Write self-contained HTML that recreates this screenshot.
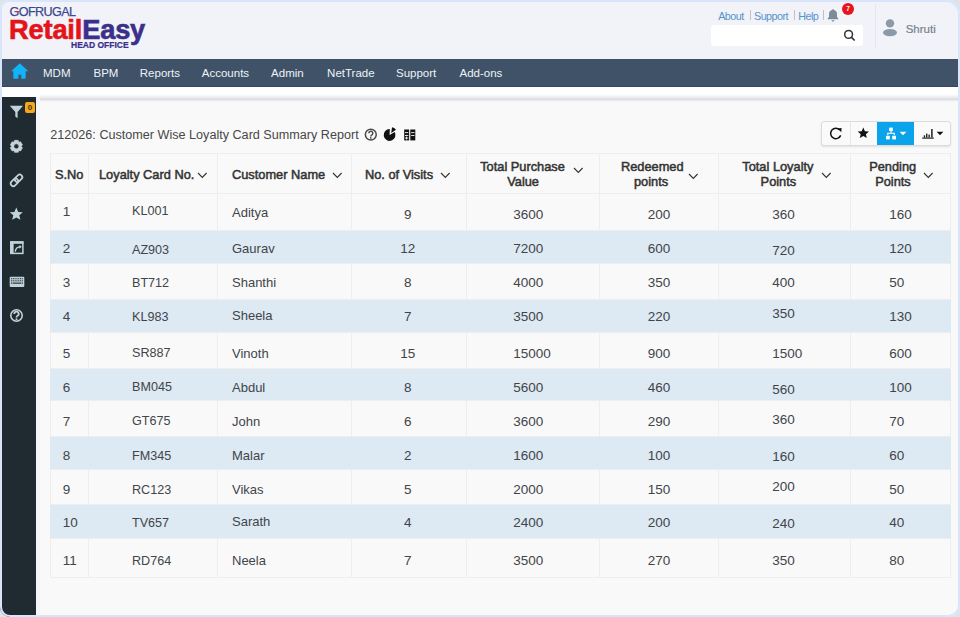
<!DOCTYPE html><html><head><meta charset="utf-8"><style>

*{margin:0;padding:0;box-sizing:border-box}
html,body{width:960px;height:617px;overflow:hidden;background:#d9e5f8;font-family:"Liberation Sans", sans-serif}
.a{position:absolute;white-space:nowrap}
#frame{position:absolute;left:0;top:0;width:960px;height:617px;border:2px solid #d8e5fa;border-radius:9px 14px 12px 10px;box-shadow:0 0 0 40px #dfe3e9;z-index:50}
body{background:#f1f3f8}
.nav{color:#eef2f6;font-size:11.5px;line-height:16px}
.td{font-size:13px;line-height:16px;color:#414549}
.th{font-size:12.8px;line-height:15px;color:#333;-webkit-text-stroke:0.5px #333}

</style></head><body>
<div class="a" style="left:9.6px;top:4.6px;font-size:12.6px;line-height:14px;color:#3d4790;letter-spacing:-0.6px;-webkit-text-stroke:0.25px #3d4790">GOFRUGAL</div>
<div class="a" style="left:14.5px;top:10.8px;width:4.6px;height:1.6px;background:#e8232b"></div>
<div class="a" style="left:9px;top:15px;font-weight:bold;font-size:27.3px;line-height:30px;letter-spacing:-0.2px"><span style="color:#e5141b;-webkit-text-stroke:0.6px #e5141b">Retail</span><span style="color:#3a2f8b;-webkit-text-stroke:0.6px #3a2f8b">Easy</span></div>
<div class="a" style="left:71px;top:39.5px;font-weight:bold;font-size:8.5px;line-height:10px;color:#3a2f8b;-webkit-text-stroke:0.2px #3a2f8b">HEAD OFFICE</div>
<div class="a" style="left:718.2px;top:9px;font-size:10.8px;line-height:14px;color:#5592cc;letter-spacing:-0.55px">About</div>
<div class="a" style="left:749.5px;top:10px;width:1px;height:9.5px;background:#bcc2c9"></div>
<div class="a" style="left:754px;top:9px;font-size:10.8px;line-height:14px;color:#5592cc;letter-spacing:-0.55px">Support</div>
<div class="a" style="left:794px;top:10px;width:1px;height:9.5px;background:#bcc2c9"></div>
<div class="a" style="left:798.3px;top:9px;font-size:10.8px;line-height:14px;color:#5592cc;letter-spacing:-0.55px">Help</div>
<div class="a" style="left:823px;top:10px;width:1px;height:9.5px;background:#bcc2c9"></div>
<svg class="a" style="left:826px;top:8px" width="14" height="14" viewBox="0 0 14 14"><path d="M7 1.2c.6 0 1 .4 1 .9 1.9.4 3 2 3 4v3l1.3 1.5v.6H1.7v-.6L3 9.1v-3c0-2 1.1-3.6 3-4 0-.5.4-.9 1-.9zM5.6 12.2h2.8c0 .8-.6 1.4-1.4 1.4s-1.4-.6-1.4-1.4z" fill="#7d8a97"/></svg>
<div class="a" style="left:842px;top:3px;width:12px;height:12px;border-radius:50%;background:#e8141c;color:#fff;font-size:6.5px;line-height:12px;text-align:center;font-weight:bold">7</div>
<div class="a" style="left:711px;top:25px;width:152px;height:21px;background:#fff;border-radius:3px"></div>
<svg class="a" style="left:840px;top:27px" width="18" height="16" viewBox="840 27 18 16"><circle cx="848.6" cy="34.4" r="3.9" fill="none" stroke="#333" stroke-width="1.5"/><path d="M851.5,37.3 L854.2,40" stroke="#333" stroke-width="1.7" stroke-linecap="round"/></svg>
<div class="a" style="left:874.5px;top:4px;width:1px;height:44px;background:#e3e6ec"></div>
<svg class="a" style="left:882px;top:18px" width="16" height="19" viewBox="0 0 16 19"><circle cx="8" cy="5.4" r="4.2" fill="#8b9aa8"/><ellipse cx="8" cy="14.6" rx="7" ry="3.6" fill="#8b9aa8"/></svg>
<div class="a" style="left:905.7px;top:21.5px;font-size:11.5px;line-height:14px;color:#78828d;-webkit-text-stroke:0.2px #78828d">Shruti</div>
<div class="a" style="left:0;top:59px;width:960px;height:28px;background:#3f5268;border-bottom:1px solid #34475c"></div>
<svg class="a" style="left:0;top:59px" width="40" height="28" viewBox="0 59 40 28"><path d="M19.8,63.6 L27.8,71 L25.4,71 L25.4,78.4 L21.4,78.4 L21.4,74.4 L18.2,74.4 L18.2,78.4 L13.6,78.4 L13.6,71 L11.6,71Z" fill="#13b3f7" stroke="#13b3f7" stroke-width="0.5" stroke-linejoin="round"/></svg>
<div class="a nav" style="left:43.0px;top:64.7px">MDM</div>
<div class="a nav" style="left:93.5px;top:64.7px">BPM</div>
<div class="a nav" style="left:139.8px;top:64.7px">Reports</div>
<div class="a nav" style="left:201.8px;top:64.7px">Accounts</div>
<div class="a nav" style="left:271.1px;top:64.7px">Admin</div>
<div class="a nav" style="left:327.1px;top:64.7px">NetTrade</div>
<div class="a nav" style="left:396.0px;top:64.7px">Support</div>
<div class="a nav" style="left:459.5px;top:64.7px">Add-ons</div>
<div class="a" style="left:0;top:87px;width:960px;height:10px;background:#fff"></div>
<div class="a" style="left:0;top:97px;width:36px;height:530px;background:#1f2b31"></div>
<div class="a" style="left:36px;top:97px;width:4px;height:530px;background:#f4f6fa"></div>
<div class="a" style="left:40px;top:94px;width:930px;height:6px;background:linear-gradient(to bottom, rgba(255,255,255,0), #e9ebee 60%, #d8dadd)"></div>
<div class="a" style="left:40px;top:100px;width:930px;height:530px;background:linear-gradient(to bottom, #e6e7ea, #f9f9f9 2px)"></div>
<svg class="a" style="left:9px;top:105px" width="15" height="14" viewBox="0 0 15 14"><path d="M0.8 0.8h13.2L8.6 7v6.3L6.3 11.6V7z" fill="#c3d3db"/></svg>
<div class="a" style="left:25px;top:102px;width:10px;height:11px;border-radius:2px;background:#f3a81d;color:#4a3000;font-size:8px;line-height:11px;text-align:center;font-weight:bold">0</div>
<svg class="a" style="left:0;top:0;z-index:5" width="40" height="340" viewBox="0 0 40 340"><path d="M14.49,140.33 L18.21,140.33 L18.75,142.43 L18.54,142.31 L20.63,141.73 L22.49,144.95 L20.95,146.47 L20.95,146.23 L22.49,147.75 L20.63,150.97 L18.54,150.39 L18.75,150.27 L18.21,152.37 L14.49,152.37 L13.95,150.27 L14.16,150.39 L12.07,150.97 L10.21,147.75 L11.75,146.23 L11.75,146.47 L10.21,144.95 L12.07,141.73 L14.16,142.31 L13.95,142.43Z M16.35,143.85 a2.5,2.5 0 1,0 0.01,0Z" fill="#c3d3db" fill-rule="evenodd" stroke="#c3d3db" stroke-width="0.6" stroke-linejoin="round"/><g transform="translate(16.5,180.3) rotate(-45)" fill="none" stroke="#c3d3db" stroke-width="1.7"><rect x="-7.1" y="-2.6" width="8.4" height="5.2" rx="2.6"/><rect x="-1.3" y="-2.6" width="8.4" height="5.2" rx="2.6"/></g><path d="M16.3,207.6 L18.2,211.9 L22.8,212.3 L19.3,215.3 L20.4,219.8 L16.3,217.4 L12.2,219.8 L13.3,215.3 L9.8,212.3 L14.4,211.9Z" fill="#c3d3db"/><rect x="10.9" y="242" width="12" height="11.4" fill="none" stroke="#c3d3db" stroke-width="1.5"/><rect x="10.2" y="241.4" width="13.2" height="2.4" fill="#c3d3db"/><rect x="10.2" y="241.4" width="3.4" height="12.6" fill="#c3d3db"/><path d="M15.2,251.6 C15.6,248.4 17.4,246.8 20.4,246.8" fill="none" stroke="#c3d3db" stroke-width="1.3"/><path d="M19.4,244.9 L21.9,246.8 L19.4,248.8Z" fill="#c3d3db"/><rect x="9.7" y="276.8" width="14.6" height="10.2" rx="1" fill="#c3d3db"/><rect x="11.0" y="278.1" width="1.1" height="1.2" fill="#33444c"/><rect x="11.0" y="280.2" width="1.1" height="1.2" fill="#33444c"/><rect x="12.8" y="278.1" width="1.1" height="1.2" fill="#33444c"/><rect x="12.8" y="280.2" width="1.1" height="1.2" fill="#33444c"/><rect x="14.6" y="278.1" width="1.1" height="1.2" fill="#33444c"/><rect x="14.6" y="280.2" width="1.1" height="1.2" fill="#33444c"/><rect x="16.4" y="278.1" width="1.1" height="1.2" fill="#33444c"/><rect x="16.4" y="280.2" width="1.1" height="1.2" fill="#33444c"/><rect x="18.2" y="278.1" width="1.1" height="1.2" fill="#33444c"/><rect x="18.2" y="280.2" width="1.1" height="1.2" fill="#33444c"/><rect x="20.0" y="278.1" width="1.1" height="1.2" fill="#33444c"/><rect x="20.0" y="280.2" width="1.1" height="1.2" fill="#33444c"/><rect x="21.8" y="278.1" width="1.1" height="1.2" fill="#33444c"/><rect x="21.8" y="280.2" width="1.1" height="1.2" fill="#33444c"/><rect x="12.6" y="282.5" width="8.8" height="1.3" fill="#33444c"/><rect x="11.0" y="282.5" width="1.1" height="1.3" fill="#33444c"/><rect x="21.9" y="282.5" width="1.1" height="1.3" fill="#33444c"/><circle cx="16.5" cy="315.5" r="5.7" fill="none" stroke="#c3d3db" stroke-width="1.6"/><path d="M14.3,314.0 a2.2,2.2 0 1,1 3.3,1.8 c-0.8,0.4 -1.1,0.8 -1.1,1.6" fill="none" stroke="#c3d3db" stroke-width="1.8"/><circle cx="16.5" cy="319.2" r="1" fill="#c3d3db"/></svg>
<div class="a" style="left:50.3px;top:127px;font-size:12.62px;line-height:16px;color:#474747">212026: Customer Wise Loyalty Card Summary Report</div>
<svg class="a" style="left:360px;top:124px" width="60" height="20" viewBox="360 124 60 20"><circle cx="370.8" cy="134.6" r="5.45" fill="none" stroke="#4a4a4a" stroke-width="1.5"/><path d="M368.8,133.3 a2,2 0 1,1 3.1,1.6 c-0.7,0.4 -1.1,0.7 -1.1,1.5" fill="none" stroke="#4a4a4a" stroke-width="1.5"/><circle cx="370.8" cy="137.9" r="0.85" fill="#4a4a4a"/><path d="M389.6,135.0 L389.81,129.10 A5.9,5.9 0 1,0 394.71,132.05Z" fill="#111"/><path d="M391.20000000000005,133.1 L392.02,127.26 A5.9,5.9 0 0,1 395.97,129.63Z" fill="#111"/><rect x="404.2" y="129.5" width="4.9" height="10.9" fill="#111"/><rect x="410.3" y="129.5" width="5" height="10.9" fill="#111"/><rect x="405" y="132.2" width="3.3" height="0.9" fill="#f8f8f8"/><rect x="411.1" y="132.2" width="3.4" height="0.9" fill="#f8f8f8"/><rect x="405" y="135.0" width="3.3" height="0.9" fill="#f8f8f8"/><rect x="411.1" y="135.0" width="3.4" height="0.9" fill="#f8f8f8"/><rect x="406.2" y="136.6" width="0.9" height="3" fill="#f8f8f8"/><rect x="405" y="137.6" width="3.3" height="0.9" fill="#f8f8f8"/></svg>
<div class="a" style="left:821px;top:121px;width:130px;height:25px;border:1px solid #dcdcdc;border-radius:3px;background:#fafafa;box-shadow:0 1px 2px rgba(0,0,0,0.1);overflow:hidden"><div class="a" style="left:27.5px;top:0;width:1px;height:23px;background:#e6e6e6"></div><div class="a" style="left:55px;top:-1px;width:37px;height:25px;background:#0ba3ea"></div></div>
<svg class="a" style="left:820px;top:120px;z-index:3" width="135" height="28" viewBox="820 120 135 28"><path d="M839.8,130.0 A5.2,5.2 0 1,0 840.7,135.4" fill="none" stroke="#111" stroke-width="1.45"/><path d="M837.6,128.4 L841.6,128.0 L841.3,132.2Z" fill="#111"/><path d="M863.3,127.6 L864.9,131.3 L868.9,131.6 L865.9,134.2 L866.8,138.1 L863.3,136.0 L859.8,138.1 L860.7,134.2 L857.7,131.6 L861.7,131.3Z" fill="#111"/><rect x="889.2" y="127.6" width="3.6" height="3.4" fill="#fff"/><path d="M891,131 v2.2 M887.8,135.2 v-2 h6.4 v2" fill="none" stroke="#fff" stroke-width="1.1"/><rect x="886" y="135.8" width="3.8" height="3.6" fill="#fff"/><rect x="892.2" y="135.8" width="3.8" height="3.6" fill="#fff"/><path d="M899.6,131.7 L906.4,131.7 L903,135.2Z" fill="#fff"/><path d="M922.2,138.1 h11.6" stroke="#111" stroke-width="1.1"/><rect x="923.8" y="135.3" width="1.3" height="2.2" fill="#111"/><rect x="926.1" y="133.6" width="1.3" height="3.9" fill="#111"/><rect x="928.5" y="134.6" width="1.3" height="2.9" fill="#111"/><rect x="931.2" y="129.0" width="1.4" height="8.5" fill="#111"/><path d="M936.6,131.7 L943.4,131.7 L940,135.2Z" fill="#111"/></svg>
<div class="a" style="left:50px;top:153px;width:901px;height:425px;border:1px solid #eeeeee;background:#f9f9f9"></div>
<div class="a" style="left:88px;top:153px;width:1px;height:425px;background:#eeeeee"></div>
<div class="a" style="left:217px;top:153px;width:1px;height:425px;background:#eeeeee"></div>
<div class="a" style="left:351px;top:153px;width:1px;height:425px;background:#eeeeee"></div>
<div class="a" style="left:466px;top:153px;width:1px;height:425px;background:#eeeeee"></div>
<div class="a" style="left:599px;top:153px;width:1px;height:425px;background:#eeeeee"></div>
<div class="a" style="left:718px;top:153px;width:1px;height:425px;background:#eeeeee"></div>
<div class="a" style="left:850px;top:153px;width:1px;height:425px;background:#eeeeee"></div>
<div class="a" style="left:51px;top:193px;width:899px;height:1px;background:#eeeeee"></div>
<div class="a" style="left:50px;top:231px;width:901px;height:33px;background:#dde9f3"></div>
<div class="a" style="left:51px;top:230px;width:899px;height:1px;background:#eeeeee"></div>
<div class="a" style="left:51px;top:263px;width:899px;height:1px;background:#eeeeee"></div>
<div class="a" style="left:50px;top:300px;width:901px;height:33px;background:#dde9f3"></div>
<div class="a" style="left:51px;top:299px;width:899px;height:1px;background:#eeeeee"></div>
<div class="a" style="left:51px;top:332px;width:899px;height:1px;background:#eeeeee"></div>
<div class="a" style="left:50px;top:369px;width:901px;height:32px;background:#dde9f3"></div>
<div class="a" style="left:51px;top:368px;width:899px;height:1px;background:#eeeeee"></div>
<div class="a" style="left:51px;top:400px;width:899px;height:1px;background:#eeeeee"></div>
<div class="a" style="left:50px;top:437px;width:901px;height:33px;background:#dde9f3"></div>
<div class="a" style="left:51px;top:436px;width:899px;height:1px;background:#eeeeee"></div>
<div class="a" style="left:51px;top:469px;width:899px;height:1px;background:#eeeeee"></div>
<div class="a" style="left:50px;top:505px;width:901px;height:34px;background:#dde9f3"></div>
<div class="a" style="left:51px;top:504px;width:899px;height:1px;background:#eeeeee"></div>
<div class="a" style="left:51px;top:538px;width:899px;height:1px;background:#eeeeee"></div>
<div class="a th" style="left:55.0px;top:166.9px">S.No</div>
<div class="a th" style="left:99.0px;top:166.9px">Loyalty Card No.</div>
<svg class="a" style="left:196.5px;top:172.0px" width="11" height="7" viewBox="0 0 11 7"><path d="M1,1 L5.3,5.4 L9.6,1" fill="none" stroke="#333" stroke-width="1.15"/></svg>
<div class="a th" style="left:232.0px;top:166.9px">Customer Name</div>
<svg class="a" style="left:331.5px;top:171.8px" width="11" height="7" viewBox="0 0 11 7"><path d="M1,1 L5.3,5.4 L9.6,1" fill="none" stroke="#333" stroke-width="1.15"/></svg>
<div class="a th" style="left:365.0px;top:166.9px">No. of Visits</div>
<svg class="a" style="left:439.8px;top:171.8px" width="11" height="7" viewBox="0 0 11 7"><path d="M1,1 L5.3,5.4 L9.6,1" fill="none" stroke="#333" stroke-width="1.15"/></svg>
<div class="a th" style="left:480.2px;top:159.3px">Total Purchase</div>
<div class="a th" style="left:507.2px;top:174.0px">Value</div>
<svg class="a" style="left:572.8px;top:167.0px" width="11" height="7" viewBox="0 0 11 7"><path d="M1,1 L5.3,5.4 L9.6,1" fill="none" stroke="#333" stroke-width="1.15"/></svg>
<div class="a th" style="left:621.0px;top:159.3px">Redeemed</div>
<div class="a th" style="left:634.0px;top:174.0px">points</div>
<svg class="a" style="left:687.8px;top:172.5px" width="11" height="7" viewBox="0 0 11 7"><path d="M1,1 L5.3,5.4 L9.6,1" fill="none" stroke="#333" stroke-width="1.15"/></svg>
<div class="a th" style="left:742.3px;top:159.3px">Total Loyalty</div>
<div class="a th" style="left:760.6px;top:174.0px">Points</div>
<svg class="a" style="left:821.0px;top:172.3px" width="11" height="7" viewBox="0 0 11 7"><path d="M1,1 L5.3,5.4 L9.6,1" fill="none" stroke="#333" stroke-width="1.15"/></svg>
<div class="a th" style="left:869.2px;top:159.3px">Pending</div>
<div class="a th" style="left:875.2px;top:174.0px">Points</div>
<svg class="a" style="left:922.6px;top:172.3px" width="11" height="7" viewBox="0 0 11 7"><path d="M1,1 L5.3,5.4 L9.6,1" fill="none" stroke="#333" stroke-width="1.15"/></svg>
<div class="a td" style="font-size:13.5px;left:62.7px;top:204.4px">1</div>
<div class="a td" style="font-size:12.6px;left:132.0px;top:203.4px">KL001</div>
<div class="a td" style="left:232.0px;top:205.0px">Aditya</div>
<div class="a td" style="font-size:13.5px;left:357.8px;width:100px;text-align:center;top:207.4px">9</div>
<div class="a td" style="font-size:13.5px;left:513.2px;top:207.4px">3600</div>
<div class="a td" style="font-size:13.5px;left:647.8px;top:207.4px">200</div>
<div class="a td" style="font-size:13.5px;left:772.2px;top:207.4px">360</div>
<div class="a td" style="font-size:13.5px;left:889.2px;top:207.4px">160</div>
<div class="a td" style="font-size:13.5px;left:62.7px;top:240.7px">2</div>
<div class="a td" style="font-size:12.6px;left:132.0px;top:241.7px">AZ903</div>
<div class="a td" style="left:232.0px;top:240.7px">Gaurav</div>
<div class="a td" style="font-size:13.5px;left:357.8px;width:100px;text-align:center;top:240.7px">12</div>
<div class="a td" style="font-size:13.5px;left:513.2px;top:240.7px">7200</div>
<div class="a td" style="font-size:13.5px;left:647.8px;top:240.7px">600</div>
<div class="a td" style="font-size:13.5px;left:772.2px;top:243.4px">720</div>
<div class="a td" style="font-size:13.5px;left:889.2px;top:240.7px">120</div>
<div class="a td" style="font-size:13.5px;left:62.7px;top:275.0px">3</div>
<div class="a td" style="font-size:12.6px;left:132.0px;top:275.0px">BT712</div>
<div class="a td" style="left:232.0px;top:275.0px">Shanthi</div>
<div class="a td" style="font-size:13.5px;left:357.8px;width:100px;text-align:center;top:275.0px">8</div>
<div class="a td" style="font-size:13.5px;left:513.2px;top:275.0px">4000</div>
<div class="a td" style="font-size:13.5px;left:647.8px;top:275.0px">350</div>
<div class="a td" style="font-size:13.5px;left:772.2px;top:275.0px">400</div>
<div class="a td" style="font-size:13.5px;left:889.2px;top:275.0px">50</div>
<div class="a td" style="font-size:13.5px;left:62.7px;top:309.0px">4</div>
<div class="a td" style="font-size:12.6px;left:132.0px;top:309.0px">KL983</div>
<div class="a td" style="left:232.0px;top:308.4px">Sheela</div>
<div class="a td" style="font-size:13.5px;left:357.8px;width:100px;text-align:center;top:309.0px">7</div>
<div class="a td" style="font-size:13.5px;left:513.2px;top:309.0px">3500</div>
<div class="a td" style="font-size:13.5px;left:647.8px;top:309.0px">220</div>
<div class="a td" style="font-size:13.5px;left:772.2px;top:306.4px">350</div>
<div class="a td" style="font-size:13.5px;left:889.2px;top:309.0px">130</div>
<div class="a td" style="font-size:13.5px;left:62.7px;top:346.4px">5</div>
<div class="a td" style="font-size:12.6px;left:132.0px;top:344.7px">SR887</div>
<div class="a td" style="left:232.0px;top:346.4px">Vinoth</div>
<div class="a td" style="font-size:13.5px;left:357.8px;width:100px;text-align:center;top:346.4px">15</div>
<div class="a td" style="font-size:13.5px;left:513.2px;top:346.4px">15000</div>
<div class="a td" style="font-size:13.5px;left:647.8px;top:346.4px">900</div>
<div class="a td" style="font-size:13.5px;left:772.2px;top:345.7px">1500</div>
<div class="a td" style="font-size:13.5px;left:889.2px;top:346.4px">600</div>
<div class="a td" style="font-size:13.5px;left:62.7px;top:380.0px">6</div>
<div class="a td" style="font-size:12.6px;left:132.0px;top:379.0px">BM045</div>
<div class="a td" style="left:232.0px;top:379.7px">Abdul</div>
<div class="a td" style="font-size:13.5px;left:357.8px;width:100px;text-align:center;top:380.0px">8</div>
<div class="a td" style="font-size:13.5px;left:513.2px;top:380.0px">5600</div>
<div class="a td" style="font-size:13.5px;left:647.8px;top:380.0px">460</div>
<div class="a td" style="font-size:13.5px;left:772.2px;top:381.7px">560</div>
<div class="a td" style="font-size:13.5px;left:889.2px;top:380.0px">100</div>
<div class="a td" style="font-size:13.5px;left:62.7px;top:414.4px">7</div>
<div class="a td" style="font-size:12.6px;left:132.0px;top:413.4px">GT675</div>
<div class="a td" style="left:232.0px;top:413.7px">John</div>
<div class="a td" style="font-size:13.5px;left:357.8px;width:100px;text-align:center;top:414.4px">6</div>
<div class="a td" style="font-size:13.5px;left:513.2px;top:414.4px">3600</div>
<div class="a td" style="font-size:13.5px;left:647.8px;top:414.4px">290</div>
<div class="a td" style="font-size:13.5px;left:772.2px;top:412.0px">360</div>
<div class="a td" style="font-size:13.5px;left:889.2px;top:414.4px">70</div>
<div class="a td" style="font-size:13.5px;left:62.7px;top:447.7px">8</div>
<div class="a td" style="font-size:12.6px;left:132.0px;top:447.7px">FM345</div>
<div class="a td" style="left:232.0px;top:447.7px">Malar</div>
<div class="a td" style="font-size:13.5px;left:357.8px;width:100px;text-align:center;top:447.7px">2</div>
<div class="a td" style="font-size:13.5px;left:513.2px;top:447.7px">1600</div>
<div class="a td" style="font-size:13.5px;left:647.8px;top:447.7px">100</div>
<div class="a td" style="font-size:13.5px;left:772.2px;top:449.4px">160</div>
<div class="a td" style="font-size:13.5px;left:889.2px;top:447.7px">60</div>
<div class="a td" style="font-size:13.5px;left:62.7px;top:481.7px">9</div>
<div class="a td" style="font-size:12.6px;left:132.0px;top:481.7px">RC123</div>
<div class="a td" style="left:232.0px;top:481.7px">Vikas</div>
<div class="a td" style="font-size:13.5px;left:357.8px;width:100px;text-align:center;top:482.0px">5</div>
<div class="a td" style="font-size:13.5px;left:513.2px;top:482.0px">2000</div>
<div class="a td" style="font-size:13.5px;left:647.8px;top:482.0px">150</div>
<div class="a td" style="font-size:13.5px;left:772.2px;top:479.4px">200</div>
<div class="a td" style="font-size:13.5px;left:889.2px;top:482.0px">50</div>
<div class="a td" style="font-size:13.5px;left:62.7px;top:515.0px">10</div>
<div class="a td" style="font-size:12.6px;left:132.0px;top:515.0px">TV657</div>
<div class="a td" style="left:232.0px;top:513.7px">Sarath</div>
<div class="a td" style="font-size:13.5px;left:357.8px;width:100px;text-align:center;top:515.0px">4</div>
<div class="a td" style="font-size:13.5px;left:513.2px;top:515.0px">2400</div>
<div class="a td" style="font-size:13.5px;left:647.8px;top:515.0px">200</div>
<div class="a td" style="font-size:13.5px;left:772.2px;top:516.0px">240</div>
<div class="a td" style="font-size:13.5px;left:889.2px;top:515.0px">40</div>
<div class="a td" style="font-size:13.5px;left:62.7px;top:552.7px">11</div>
<div class="a td" style="font-size:12.6px;left:132.0px;top:552.7px">RD764</div>
<div class="a td" style="left:232.0px;top:552.7px">Neela</div>
<div class="a td" style="font-size:13.5px;left:357.8px;width:100px;text-align:center;top:552.7px">7</div>
<div class="a td" style="font-size:13.5px;left:513.2px;top:552.7px">3500</div>
<div class="a td" style="font-size:13.5px;left:647.8px;top:552.7px">270</div>
<div class="a td" style="font-size:13.5px;left:772.2px;top:552.7px">350</div>
<div class="a td" style="font-size:13.5px;left:889.2px;top:552.7px">80</div>
<div id="frame"></div>
</body></html>
